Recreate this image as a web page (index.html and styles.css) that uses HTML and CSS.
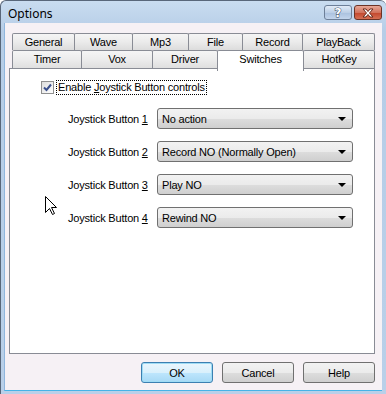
FILE: index.html
```html
<!DOCTYPE html>
<html lang="en">
<head>
    <meta charset="UTF-8">
    <title>Options</title>
    <link rel="stylesheet" href="styles.css">
</head>
<body>
    <div class="window">
        <div class="titlebar">
            <span class="title">Options</span>
            <div class="caption-buttons">
                <span class="cap-btn help">?</span>
                <span class="cap-btn close">
                    <svg width="14" height="10" viewBox="0 0 14 10">
                        <path d="M2 1 L5 1 L7 3.5 L9 1 L12 1 L8.5 5 L12 9 L9 9 L7 6.5 L5 9 L2 9 L5.5 5 Z" fill="#fff" stroke="#6b2a1c" stroke-width="1" stroke-linejoin="round"/>
                    </svg>
                </span>
            </div>
        </div>

        <div class="client">
            <div class="tabs">
                <div class="tab-row row-top">
                    <div class="tab">General</div>
                    <div class="tab">Wave</div>
                    <div class="tab">Mp3</div>
                    <div class="tab">File</div>
                    <div class="tab">Record</div>
                    <div class="tab">PlayBack</div>
                </div>
                <div class="tab-row row-bottom">
                    <div class="tab">Timer</div>
                    <div class="tab">Vox</div>
                    <div class="tab">Driver</div>
                    <div class="tab selected">Switches</div>
                    <div class="tab">HotKey</div>
                </div>
            </div>

            <div class="tab-panel">
                <label class="check-row">
                    <span class="checkbox">
                        <svg width="9" height="9" viewBox="0 0 9 9">
                            <path d="M1 4.5 L3.5 7 L8 1.5" fill="none" stroke="#3a4f8c" stroke-width="2"/>
                        </svg>
                    </span>
                    <span class="check-label">Enable <u>J</u>oystick Button controls</span>
                </label>

                <div class="joy-row">
                    <span class="joy-label">Joystick Button <u>1</u></span>
                    <div class="combo"><span>No action</span><span class="arrow"></span></div>
                </div>
                <div class="joy-row">
                    <span class="joy-label">Joystick Button <u>2</u></span>
                    <div class="combo"><span>Record NO (Normally Open)</span><span class="arrow"></span></div>
                </div>
                <div class="joy-row">
                    <span class="joy-label">Joystick Button <u>3</u></span>
                    <div class="combo"><span>Play NO</span><span class="arrow"></span></div>
                </div>
                <div class="joy-row">
                    <span class="joy-label">Joystick Button <u>4</u></span>
                    <div class="combo"><span>Rewind NO</span><span class="arrow"></span></div>
                </div>
            </div>

            <div class="dialog-buttons">
                <button class="btn default">OK</button>
                <button class="btn">Cancel</button>
                <button class="btn">Help</button>
            </div>
        </div>

        <!-- mouse pointer over the dialog -->
        <svg class="cursor" width="13" height="20" viewBox="0 0 13 20">
            <path d="M0.5 0.5 L0.5 16.5 L4.5 12.5 L7.5 18.5 L9.5 17.5 L6.5 11.5 L11.5 11.5 Z" fill="#fff" stroke="#000" stroke-width="1" stroke-linejoin="miter"/>
        </svg>
    </div>
</body>
</html>
```

FILE: styles.css
```css
* {
    box-sizing: border-box;
}
body {
    margin: 0;
    background-color: #fff;
    font-family: "Liberation Sans", Arial, sans-serif;
    font-size: 11px;
    letter-spacing: -0.2px;
    color: #000;
}
.window {
    position: relative;
    width: 386px;
    height: 394px;
    border: 1px solid #59677a;
    border-bottom: none;
    border-right: none;
    border-radius: 6px 6px 0 0;
    background: linear-gradient(#c9dcf0, #b6cde7 30px, #b9d0e9);
    padding: 0 4px 3px 3px;
    display: flex;
    flex-direction: column;
}
.titlebar {
    height: 22px;
    display: flex;
    align-items: center;
    justify-content: space-between;
    padding-left: 4px;
}
.title {
    font-family: "Noto Sans", "Liberation Sans", sans-serif;
    font-size: 12px;
    letter-spacing: 0;
    color: #000;
    margin-top: 2px;
}
.caption-buttons {
    display: flex;
    gap: 2px;
    margin-top: 1px;
}
.cap-btn {
    width: 28px;
    height: 15px;
    border: 1px solid #6d7f98;
    border-radius: 3px;
    display: flex;
    align-items: center;
    justify-content: center;
}
.help {
    background: linear-gradient(#e1ebf7, #bccfe6 50%, #a9c0de 51%, #c3d5ec);
    color: #fff;
    font-family: "DejaVu Sans", sans-serif;
    font-weight: bold;
    font-size: 12px;
    -webkit-text-stroke: 1px #3b4a62;
    paint-order: stroke fill;
}
.close {
    border-color: #6b3326;
    background: linear-gradient(#e7a898, #d2735d 50%, #c2452c 51%, #d66f53);
}
.client {
    flex: 1;
    background-color: #f6f1f5;
    border-left: 1px solid #8fb6dd;
    border-bottom: 1px solid #47b3e6;
    padding: 10px 6px 0 4px;
    display: flex;
    flex-direction: column;
}
.tabs {
    margin-left: 3px;
    width: 362px;
}
.tab-row {
    display: grid;
    align-items: end;
}
.row-top {
    grid-template-columns: 62px 58px 56px 54px 60px 72px;
    height: 17px;
}
.row-bottom {
    grid-template-columns: 69px 71px 65px 86px 71px;
    height: 18px;
}
.tab {
    height: 100%;
    border: 1px solid #898c95;
    border-bottom: none;
    border-radius: 2px 2px 0 0;
    background: linear-gradient(#f5f5f5, #ebebeb 50%, #dcdcdc);
    text-align: center;
    line-height: 16px;
    margin-right: -1px;
}
.row-bottom .tab {
    line-height: 17px;
}
.tab.selected {
    position: relative;
    height: 21px;
    margin-bottom: -1px;
    background: #fff;
    line-height: 17px;
    z-index: 1;
}
.tab-panel {
    width: 366px;
    height: 286px;
    border: 1px solid #898c95;
    background-color: #fff;
    padding: 11px 0 0 31px;
}
.check-row {
    display: flex;
    align-items: center;
    gap: 2px;
    height: 15px;
}
.checkbox {
    width: 13px;
    height: 13px;
    border: 1px solid #8f8f8f;
    background: linear-gradient(135deg, #dcdcdc, #fff);
    display: flex;
    align-items: center;
    justify-content: center;
}
.check-label {
    border: 1px dotted #000;
    padding: 0 1px;
    line-height: 13px;
}
.joy-row {
    display: grid;
    grid-template-columns: 89px 196px;
    align-items: center;
    margin-left: 27px;
    height: 21px;
}
.joy-row + .joy-row {
    margin-top: 12px;
}
.check-row + .joy-row {
    margin-top: 13px;
}
.combo {
    height: 21px;
    border: 1px solid #707070;
    border-radius: 3px;
    background: linear-gradient(#f2f2f2, #ebebeb 50%, #dddddd 51%, #cfcfcf);
    display: flex;
    align-items: center;
    justify-content: space-between;
    padding: 0 6px 0 4px;
}
.arrow {
    width: 0;
    height: 0;
    border-left: 4px solid transparent;
    border-right: 4px solid transparent;
    border-top: 4px solid #000;
}
.dialog-buttons {
    display: flex;
    justify-content: flex-end;
    gap: 9px;
    width: 366px;
    margin-top: 8px;
}
.btn {
    width: 72px;
    height: 21px;
    font-family: "Liberation Sans", Arial, sans-serif;
    font-size: 11px;
    letter-spacing: -0.2px;
    color: #000;
    border: 1px solid #707070;
    border-radius: 3px;
    background: linear-gradient(#f2f2f2, #ebebeb 50%, #dddddd 51%, #cfcfcf);
    padding: 0;
}
.btn.default {
    border-color: #3c7fb1;
    box-shadow: inset 0 0 0 1px #9fdcf5;
    background: linear-gradient(#eaf6fd, #d9f0fc 50%, #bee6fd 51%, #a7d9f5);
}
.cursor {
    position: absolute;
    left: 44px;
    top: 195px;
}
```
